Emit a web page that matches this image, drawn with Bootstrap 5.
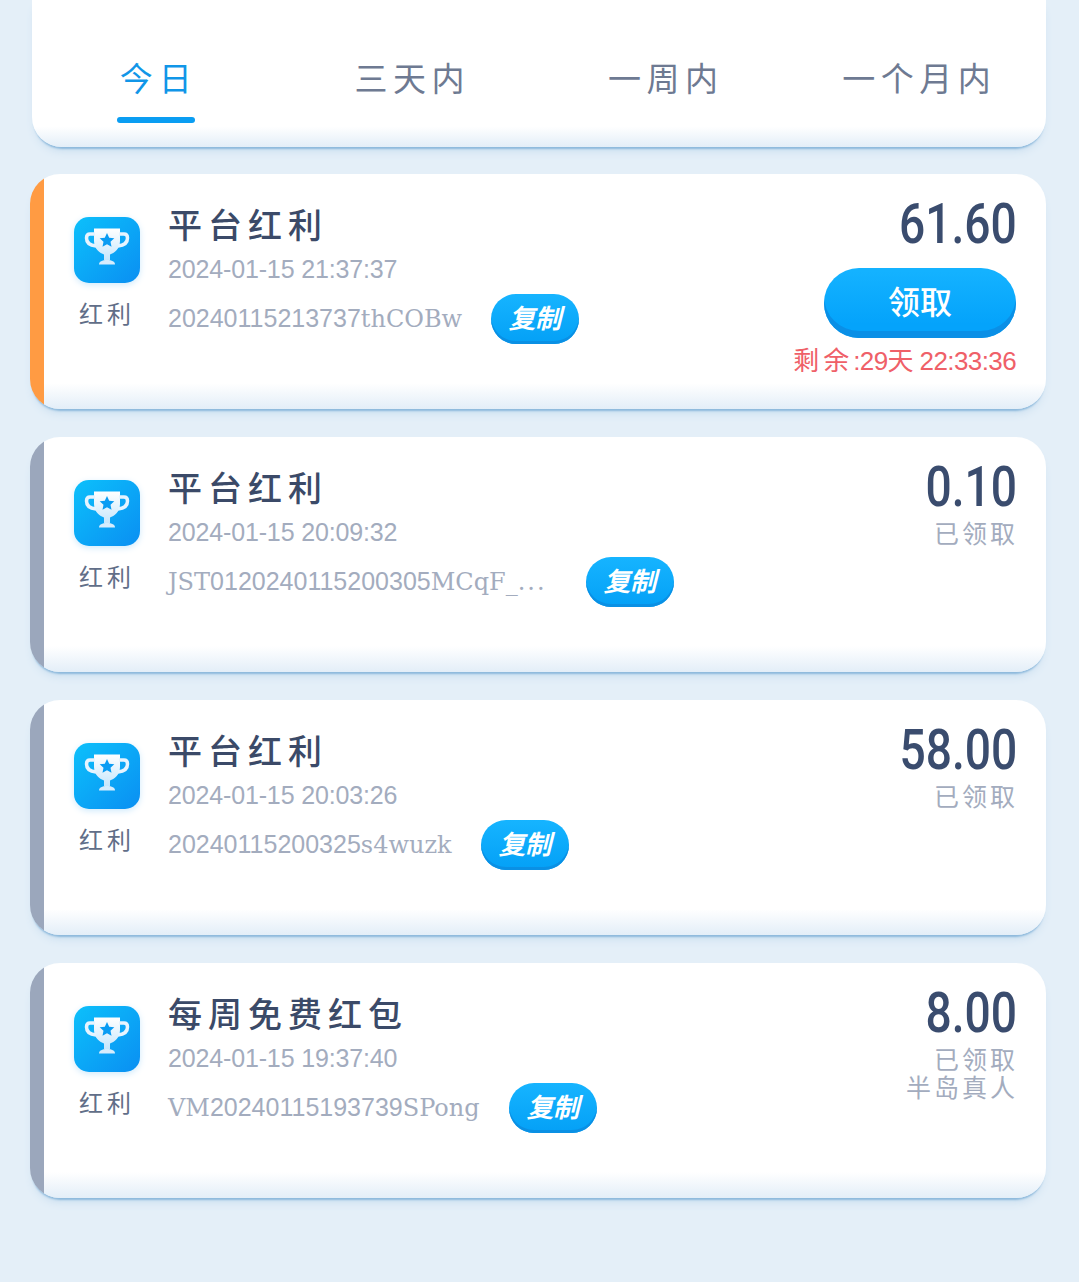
<!DOCTYPE html>
<html lang="zh-CN">
<head>
    <meta charset="UTF-8">
    <meta name="viewport" content="width=device-width, initial-scale=1.0">
    <title>红利记录</title>
    <link href="https://cdn.jsdelivr.net/npm/bootstrap@5.3.1/dist/css/bootstrap.min.css" rel="stylesheet">
    <style>
        body {
            background-color: #e4eff8;
            font-family: "Noto Sans CJK SC", sans-serif;
            color: #3b4a68;
        }
        .page-wrap {
            padding: 0 33px 0 30px;
        }
        .tab-box {
            height: 147px;
            margin: 0 0 27px 2px;
            padding: 55px 0 0 0;
            background: linear-gradient(#fff 86%, #e3eef8);
            border-radius: 0 0 30px 30px;
            box-shadow: 0 4px 2px -2px #8db9dc, 0 7px 8px -3px #c9deef;
        }
        .tab-item {
            flex: 1 1 0;
            text-align: center;
            font-size: 33px;
            line-height: 44px;
            letter-spacing: 5.5px;
            color: #6e7a92;
        }
        .tab-item.on {
            color: #1196e8;
            letter-spacing: 6px;
        }
        .tab-item.on::after {
            content: "";
            display: block;
            width: 78px;
            height: 6px;
            margin: 18px 0 0 calc(50% - 42px);
            border-radius: 3px;
            background-color: #0a9df2;
        }
        .bonus-card {
            --strip: #9ba7bc;
            height: 235px;
            margin-bottom: 28px;
            padding: 30px 30px 0 44px;
            background:
                linear-gradient(var(--strip), var(--strip)) left top / 14px 100% no-repeat,
                linear-gradient(#fff 89%, #e3eef8);
            border-radius: 30px;
            box-shadow: 0 4px 2px -2px #8db9dc, 0 7px 8px -3px #c9deef;
        }
        .bonus-card.active-card {
            --strip: #ff9b43;
        }
        .left-col {
            width: 66px;
            margin-top: 13px;
        }
        .trophy-icon {
            display: block;
            width: 66px;
            height: 66px;
            filter: drop-shadow(0 2px 3px #cfeafc);
        }
        .left-label {
            margin-top: 13px;
            font-size: 24px;
            line-height: 34px;
            letter-spacing: 4px;
            white-space: nowrap;
            color: #616e88;
            text-align: center;
        }
        .mid-col {
            margin-left: 28px;
        }
        .item-title {
            font-size: 34px;
            line-height: 40px;
            letter-spacing: 6px;
            font-weight: 500;
        }
        .item-date {
            margin-top: 5px;
            font-family: "Liberation Sans", sans-serif;
            font-size: 25px;
            line-height: 40px;
            letter-spacing: -.15px;
            color: #a3acbe;
        }
        .item-code {
            height: 60px;
            font-family: "Liberation Sans", sans-serif;
            font-size: 25px;
            color: #a3acbe;
        }
        .item-code em {
            font-family: "DejaVu Serif", serif;
            font-style: normal;
            font-size: 24px;
        }
        .item-code em.cut-dots {
            letter-spacing: 2px;
        }
        .copy-btn {
            width: 88px;
            height: 50px;
            margin-left: 29px;
            padding: 0;
            border: 0;
            font-size: 26px;
            line-height: 46px;
            font-weight: 700;
            font-style: italic;
            color: #fff;
            background: linear-gradient(#16b4ff, #04a0f6);
            box-shadow: inset 0 -3px 0 #0a90e4;
        }
        .copy-btn.after-cut {
            margin-left: 39px;
        }
        .right-col {
            margin-left: auto;
            text-align: right;
        }
        .amount {
            display: block;
            margin-right: -1px;
            font-family: Roboto, sans-serif;
            font-size: 55px;
            line-height: 40px;
            font-weight: 500;
            transform: scaleX(.84);
            transform-origin: right center;
            color: #3a4c6e;
        }
        .take-btn {
            width: 192px;
            height: 70px;
            margin-top: 24px;
            padding: 0 0 6px 0;
            border: 0;
            font-size: 32px;
            font-weight: 500;
            color: #fff;
            background: linear-gradient(#14b2ff 5%, #04a3fb 80%);
            box-shadow: inset 0 -7px 0 #0a8fe6;
        }
        .left-time {
            margin-top: 5px;
            font-family: "Liberation Sans", "Noto Sans CJK SC", sans-serif;
            font-size: 26px;
            line-height: 36px;
            letter-spacing: -.6px;
            white-space: nowrap;
            color: #ef6068;
        }
        .wide-gap {
            letter-spacing: 4px;
        }
        .state-text {
            margin: 11px -2px 0 0;
            font-size: 25px;
            line-height: 28px;
            letter-spacing: 3px;
            color: #a3acbe;
        }
    </style>
</head>
<body>
<svg width="0" height="0" class="d-block position-absolute">
    <defs>
        <linearGradient id="iconBg" x1="0" y1="0" x2="1" y2="1">
            <stop offset="0" stop-color="#0cc0fb"/>
            <stop offset="1" stop-color="#0a8ff2"/>
        </linearGradient>
        <linearGradient id="cupFill" x1="0" y1="0" x2="0" y2="1">
            <stop offset="0" stop-color="#ffffff"/>
            <stop offset="1" stop-color="#c6e6fc"/>
        </linearGradient>
        <symbol id="trophy" viewBox="0 0 66 66">
            <rect width="66" height="66" rx="15" fill="url(#iconBg)"/>
            <path d="M20 11.500H46V24C46 32 40 36 36 37.500V43H30V37.500C26 36 20 32 20 24Z" fill="url(#cupFill)"/>
            <path d="M21 17H16C13 17 12.500 19 12.500 21C12.500 25.500 16 28.500 22 29" fill="none" stroke="#e6f4ff" stroke-width="3.500"/>
            <path d="M45 17H50C53 17 53.500 19 53.500 21C53.500 25.500 50 28.500 44 29" fill="none" stroke="#e6f4ff" stroke-width="3.500"/>
            <path d="M25 47.500C25 44.500 28 43 33 43S41 44.500 41 47.500Z" fill="#d6ecfd"/>
            <path d="M33 16L35.200 20.700L40.300 21.300L36.500 24.700L37.500 29.700L33 27.200L28.500 29.700L29.500 24.700L25.700 21.300L30.800 20.700Z" fill="#0a9cf3"/>
        </symbol>
    </defs>
</svg>

<div class="page-wrap">
    <div class="tab-box d-flex">
        <div class="tab-item on">今日</div>
        <div class="tab-item">三天内</div>
        <div class="tab-item">一周内</div>
        <div class="tab-item">一个月内</div>
    </div>

    <div class="bonus-card active-card d-flex">
        <div class="left-col">
            <svg class="trophy-icon"><use href="#trophy"/></svg>
            <div class="left-label">红利</div>
        </div>
        <div class="mid-col">
            <div class="item-title">平台红利</div>
            <div class="item-date">2024-01-15 21:37:37</div>
            <div class="item-code d-flex align-items-center">
                <span>20240115213737<em>thCOBw</em></span>
                <button type="button" class="btn rounded-pill copy-btn">复制</button>
            </div>
        </div>
        <div class="right-col">
            <span class="amount">61.60</span>
            <button type="button" class="btn rounded-pill take-btn">领取</button>
            <div class="left-time"><span class="wide-gap">剩余</span>:29天 22:33:36</div>
        </div>
    </div>

    <div class="bonus-card d-flex">
        <div class="left-col">
            <svg class="trophy-icon"><use href="#trophy"/></svg>
            <div class="left-label">红利</div>
        </div>
        <div class="mid-col">
            <div class="item-title">平台红利</div>
            <div class="item-date">2024-01-15 20:09:32</div>
            <div class="item-code d-flex align-items-center">
                <span><em>JST</em>0120240115200305<em>MCqF_</em><em class="cut-dots">...</em></span>
                <button type="button" class="btn rounded-pill copy-btn after-cut">复制</button>
            </div>
        </div>
        <div class="right-col">
            <span class="amount">0.10</span>
            <div class="state-text">已领取</div>
        </div>
    </div>

    <div class="bonus-card d-flex">
        <div class="left-col">
            <svg class="trophy-icon"><use href="#trophy"/></svg>
            <div class="left-label">红利</div>
        </div>
        <div class="mid-col">
            <div class="item-title">平台红利</div>
            <div class="item-date">2024-01-15 20:03:26</div>
            <div class="item-code d-flex align-items-center">
                <span>20240115200325<em>s4wuzk</em></span>
                <button type="button" class="btn rounded-pill copy-btn">复制</button>
            </div>
        </div>
        <div class="right-col">
            <span class="amount">58.00</span>
            <div class="state-text">已领取</div>
        </div>
    </div>

    <div class="bonus-card d-flex">
        <div class="left-col">
            <svg class="trophy-icon"><use href="#trophy"/></svg>
            <div class="left-label">红利</div>
        </div>
        <div class="mid-col">
            <div class="item-title">每周免费红包</div>
            <div class="item-date">2024-01-15 19:37:40</div>
            <div class="item-code d-flex align-items-center">
                <span><em>VM</em>20240115193739<em>SPong</em></span>
                <button type="button" class="btn rounded-pill copy-btn">复制</button>
            </div>
        </div>
        <div class="right-col">
            <span class="amount">8.00</span>
            <div class="state-text">已领取<br>半岛真人</div>
        </div>
    </div>
</div>

<script src="https://cdn.jsdelivr.net/npm/bootstrap@5.3.1/dist/js/bootstrap.bundle.min.js"></script>
</body>
</html>
